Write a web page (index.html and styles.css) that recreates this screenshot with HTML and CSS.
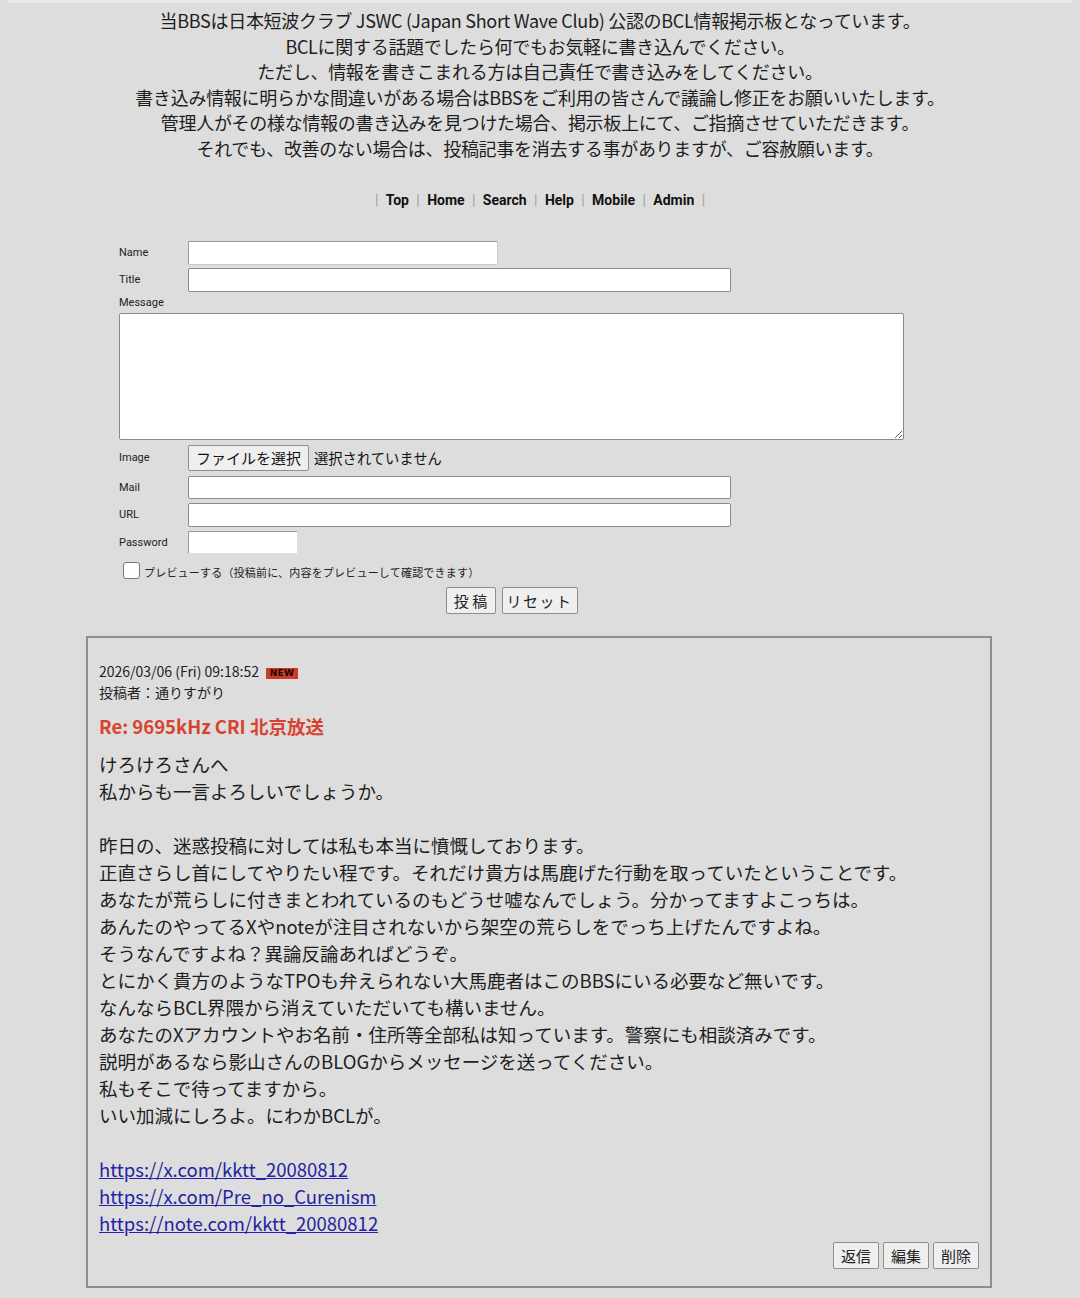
FILE: index.html
```html
<!DOCTYPE html>
<html lang="ja">
<head>
<meta charset="utf-8">
<title>JSWC BBS</title>
<link rel="stylesheet" href="styles.css">
</head>
<body>
<div class="topstrip"></div>
<div class="intro">
当BBSは日本短波クラブ JSWC (Japan Short Wave Club) 公認のBCL情報掲示板となっています。<br>
BCLに関する話題でしたら何でもお気軽に書き込んでください。<br>
ただし、情報を書きこまれる方は自己責任で書き込みをしてください。<br>
書き込み情報に明らかな間違いがある場合はBBSをご利用の皆さんで議論し修正をお願いいたします。<br>
管理人がその様な情報の書き込みを見つけた場合、掲示板上にて、ご指摘させていただきます。<br>
それでも、改善のない場合は、投稿記事を消去する事がありますが、ご容赦願います。
</div>

<nav class="nav">
  <span class="sep">|</span><a href="#">Top</a><span class="sep">|</span><a href="#">Home</a><span class="sep">|</span><a href="#">Search</a><span class="sep">|</span><a href="#">Help</a><span class="sep">|</span><a href="#">Mobile</a><span class="sep">|</span><a href="#">Admin</a><span class="sep">|</span>
</nav>

<form class="form">
  <div class="row r-name"><label class="lbl">Name</label><input class="inp w-name" type="text"></div>
  <div class="row r-title"><label class="lbl">Title</label><input class="inp w-long" type="text"></div>
  <div class="msg-lbl lbl">Message</div>
  <textarea class="ta"></textarea>
  <div class="row r-image"><label class="lbl">Image</label><span class="filebtn">ファイルを選択</span><span class="filetxt">選択されていません</span></div>
  <div class="row r-mail"><label class="lbl">Mail</label><input class="inp w-long" type="text"></div>
  <div class="row r-url"><label class="lbl">URL</label><input class="inp w-long" type="text"></div>
  <div class="row r-pass"><label class="lbl">Password</label><input class="inp w-pass" type="password"></div>
  <div class="row r-prev"><span class="chk"></span><span class="prevtxt">プレビューする（投稿前に、内容をプレビューして確認できます）</span></div>
  <div class="btns"><span class="btn b-post">投 稿</span><span class="btn b-reset">リセット</span></div>
</form>

<div class="post">
  <div class="meta">2026/03/06 (Fri) 09:18:52<span class="new">NEW</span></div>
  <div class="author">投稿者：通りすがり</div>
  <h2 class="ptitle">Re: 9695kHz CRI 北京放送</h2>
  <div class="body">
けろけろさんへ<br>
私からも一言よろしいでしょうか。<br>
<br>
昨日の、迷惑投稿に対しては私も本当に憤慨しております。<br>
正直さらし首にしてやりたい程です。それだけ貴方は馬鹿げた行動を取っていたということです。<br>
あなたが荒らしに付きまとわれているのもどうせ嘘なんでしょう。分かってますよこっちは。<br>
あんたのやってるXやnoteが注目されないから架空の荒らしをでっち上げたんですよね。<br>
そうなんですよね？異論反論あればどうぞ。<br>
とにかく貴方のようなTPOも弁えられない大馬鹿者はこのBBSにいる必要など無いです。<br>
なんならBCL界隈から消えていただいても構いません。<br>
あなたのXアカウントやお名前・住所等全部私は知っています。警察にも相談済みです。<br>
説明があるなら影山さんのBLOGからメッセージを送ってください。<br>
私もそこで待ってますから。<br>
いい加減にしろよ。にわかBCLが。<br>
<br>
<a href="#">https://x.com/kktt_20080812</a><br>
<a href="#">https://x.com/Pre_no_Curenism</a><br>
<a href="#">https://note.com/kktt_20080812</a>
  </div>
  <div class="actions"><span class="btn b-sm">返信</span><span class="btn b-sm">編集</span><span class="btn b-sm">削除</span></div>
</div>
</body>
</html>
```

FILE: styles.css
```css
html { background: #dddddd; }
body {
  margin: 0 8px 8px 8px;
  padding-top: 8px;
  background: #dddddd;
  color: #1e1e1e;
  font-family: "Noto Sans CJK JP", "Noto Sans", sans-serif;
  position: relative;
}
.topstrip {
  position: absolute;
  left: -8px; right: -8px; top: 0;
  height: 3px;
  background: #e8e8ec;
}
.intro {
  text-align: center;
  font-size: 18px;
  line-height: 25.6px;
  letter-spacing: -0.3px;
}
.nav {
  margin-top: 28px;
  text-align: center;
  font-family: Roboto, "Liberation Sans", sans-serif;
  font-weight: bold;
  font-size: 14px;
  line-height: 20px;
}
.nav a { color: #111; text-decoration: none; }
.nav .sep { color: #a0a0a0; font-weight: normal; margin: 0 7.4px; }
.form {
  margin: 31px 0 0 111px;
  width: 785px;
}
.row { display: flex; align-items: center; }
.lbl {
  width: 69px;
  flex: none;
  font-family: Roboto, "Liberation Sans", sans-serif;
  font-size: 11px;
  color: #222;
}
.inp {
  box-sizing: border-box;
  margin: 0;
  height: 24px;
  background: #fff;
  border: 1px solid #8a8a8a;
  border-radius: 2px;
  padding: 0 4px;
}
.w-name { width: 310px; border-color: #9a9a9a #c8c8c8 #c8c8c8 #9a9a9a; }
.w-long { width: 543px; }
.w-pass { width: 110px; height: 23px; border-color: #9a9a9a #dddddd #dddddd #9a9a9a; }
.r-title { margin-top: 3px; }
.msg-lbl { display: block; height: 21px; line-height: 21px; width: auto; }
.ta {
  display: block;
  box-sizing: border-box;
  width: 785px;
  height: 127px;
  margin: 0;
  background: #fff;
  border: 1px solid #8a8a8a;
  border-radius: 2px;
  resize: vertical;
}
.r-image { margin-top: 5px; }
.filebtn {
  box-sizing: border-box;
  height: 26px;
  line-height: 24px;
  padding: 0 7px;
  border: 1px solid #8f8f8f;
  border-radius: 2px;
  background: #efefef;
  font-size: 15px;
  color: #111;
}
.filetxt { margin-left: 5px; font-size: 14.3px; color: #111; }
.r-mail { margin-top: 5px; }
.r-mail .inp { height: 23px; }
.r-url { margin-top: 4px; }
.r-pass { margin-top: 4px; }
.r-prev { margin-top: 8px; padding-left: 4px; }
.chk {
  box-sizing: border-box;
  width: 17px; height: 17px;
  background: #fff;
  border: 1px solid #777;
  border-radius: 3px;
}
.prevtxt { margin-left: 4px; font-size: 11px; color: #222; position: relative; top: 2px; letter-spacing: 0.2px; }
.btns {
  margin-top: 8px;
  display: flex;
  justify-content: center;
  gap: 6px;
}
.btn {
  box-sizing: border-box;
  display: inline-block;
  height: 27px;
  line-height: 25px;
  border: 1px solid #8f8f8f;
  border-radius: 2px;
  background: #efefef;
  color: #222;
  font-size: 15px;
  text-align: center;
}
.b-post { width: 50px; }
.b-reset { width: 76px; letter-spacing: 1.5px; }
.post {
  box-sizing: border-box;
  width: 906px;
  margin: 22px auto 0 auto;
  border: 2px solid #8e8e8e;
  padding: 23px 11px 17px 11px;
  position: relative;
  left: -1px;
}
.meta, .author { font-size: 14px; line-height: 21px; color: #1e1e1e; }
.new {
  display: inline-block;
  margin-left: 7px;
  vertical-align: 1px;
  background: #cc3a28;
  color: #1a0500;
  font-family: "DejaVu Sans", sans-serif;
  font-weight: bold;
  font-size: 9px;
  line-height: 11px;
  height: 11px;
  width: 32px;
  text-align: center;
  letter-spacing: 0.3px;
}
.ptitle {
  margin: 8px 0 0 0;
  font-size: 18.5px;
  line-height: 30px;
  color: #d8432f;
  font-weight: bold;
}
.body {
  margin-top: 10px;
  font-size: 18.5px;
  line-height: 27px;
  color: #1e1e1e;
}
.body a { color: #2323a3; text-decoration: underline; }
.actions {
  margin-top: 5px;
  display: flex;
  justify-content: flex-end;
  gap: 4px;
}
.b-sm { width: 46px; height: 27px; font-size: 15px; }
```
